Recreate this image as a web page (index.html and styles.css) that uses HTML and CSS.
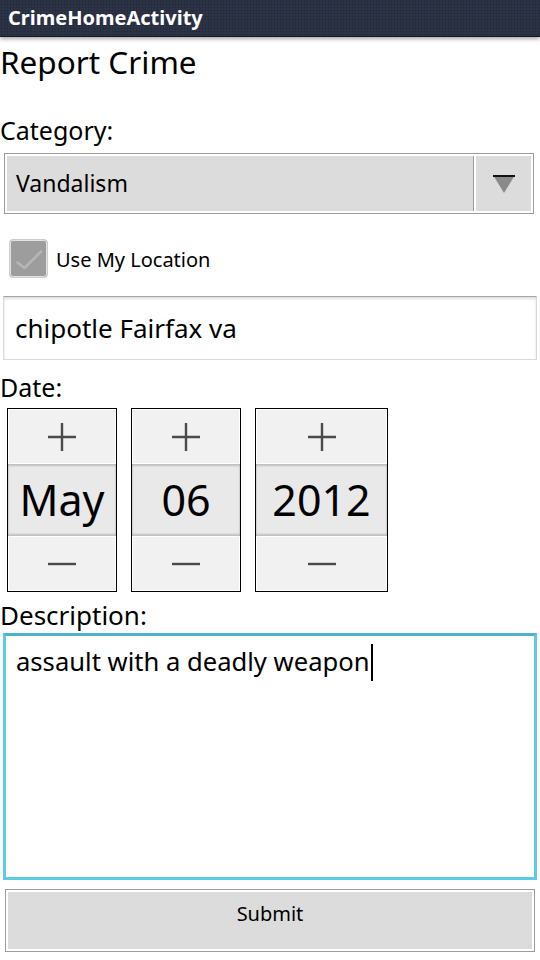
FILE: index.html
```html
<!DOCTYPE html>
<html>
<head>
<meta charset="utf-8">
<title>CrimeHomeActivity</title>
<link rel="stylesheet" href="styles.css">
</head>
<body>
<div class="titlebar">CrimeHomeActivity</div>
<div class="content">
  <h1 class="title">Report Crime</h1>
  <div class="label label-category">Category:</div>
  <div class="spinner">
    <div class="spinner-value">Vandalism</div>
    <div class="spinner-arrow">
      <svg width="22" height="18" viewBox="0 0 22 18"><polygon points="0,0 22,0 11,18" fill="#8a8a8a"/><rect x="0" y="0" width="22" height="2" fill="#111"/></svg>
    </div>
  </div>
  <div class="check-row">
    <span class="checkbox">
      <svg width="37" height="37" viewBox="0 0 37 37"><polyline points="7.5,22.5 14.5,28 31,11.5" fill="none" stroke="#b6b6b6" stroke-width="2.6" stroke-linecap="round" stroke-linejoin="round"/></svg>
    </span>
    <span class="check-label">Use My Location</span>
  </div>
  <div class="textfield">chipotle Fairfax va</div>
  <div class="label label-date">Date:</div>
  <div class="pickers">
    <div class="picker">
      <div class="pk-btn"><svg width="28" height="28" viewBox="0 0 28 28"><path d="M0 14H28M14 0V28" stroke="#4a4a4a" stroke-width="2.4"/></svg></div>
      <div class="pk-value">May</div>
      <div class="pk-btn"><svg width="28" height="28" viewBox="0 0 28 28"><path d="M0 14H28" stroke="#4a4a4a" stroke-width="2.4"/></svg></div>
    </div>
    <div class="picker">
      <div class="pk-btn"><svg width="28" height="28" viewBox="0 0 28 28"><path d="M0 14H28M14 0V28" stroke="#4a4a4a" stroke-width="2.4"/></svg></div>
      <div class="pk-value">06</div>
      <div class="pk-btn"><svg width="28" height="28" viewBox="0 0 28 28"><path d="M0 14H28" stroke="#4a4a4a" stroke-width="2.4"/></svg></div>
    </div>
    <div class="picker picker-wide">
      <div class="pk-btn"><svg width="28" height="28" viewBox="0 0 28 28"><path d="M0 14H28M14 0V28" stroke="#4a4a4a" stroke-width="2.4"/></svg></div>
      <div class="pk-value">2012</div>
      <div class="pk-btn"><svg width="28" height="28" viewBox="0 0 28 28"><path d="M0 14H28" stroke="#4a4a4a" stroke-width="2.4"/></svg></div>
    </div>
  </div>
  <div class="label label-desc">Description:</div>
  <div class="textarea">assault with a deadly weapon<span class="caret"></span></div>
  <div class="submit"><span class="submit-face">Submit</span></div>
</div>
</body>
</html>
```

FILE: styles.css
```css
html, body {
  margin: 0;
  padding: 0;
  background: #fff;
}
body {
  width: 540px;
  height: 960px;
  overflow: hidden;
  font-family: "Noto Sans", "Open Sans", "DejaVu Sans", sans-serif;
  color: #000;
}
.titlebar {
  position: relative;
  height: 36px;
  background-color: #2d3447;
  background-image: radial-gradient(rgba(0, 0, 0, 0.2) 0.8px, transparent 1.2px);
  background-size: 3px 3px;
  color: #fff;
  font-weight: bold;
  font-size: 20px;
  line-height: 36px;
  padding-left: 8px;
  box-shadow: 0 1px 0 #151820, 0 3px 4px rgba(0, 0, 0, 0.35);
}
.title {
  margin: 6px 0 0 0;
  font-size: 31.5px;
  font-weight: normal;
  line-height: 40px;
}
.label {
  font-size: 25px;
  line-height: 32px;
}
.label-category { margin-top: 32px; }
.label-date { margin-top: 11px; }
.label-desc { margin-top: 7px; font-size: 26px; }

.spinner {
  margin: 7px 6px 0 4px;
  height: 61px;
  box-sizing: border-box;
  border: 1px solid #9c9c9c;
  display: flex;
  background: #fff;
}
.spinner-value {
  flex: 1;
  margin: 2px 0 2px 2px;
  background: #dcdcdc;
  border-right: 1px solid #9c9c9c;
  font-size: 23px;
  line-height: 55px;
  padding-left: 9px;
}
.spinner-arrow {
  width: 55px;
  margin: 2px;
  background: #dcdcdc;
  display: flex;
  align-items: center;
  justify-content: center;
}

.check-row {
  display: flex;
  align-items: center;
  margin: 25px 0 0 9px;
  height: 39px;
}
.checkbox {
  width: 39px;
  height: 39px;
  box-sizing: border-box;
  border: 1px solid #cdcdcd;
  border-radius: 4px;
  background: #9d9d9d;
  box-shadow: inset 0 0 0 1px #e2e2e2;
  display: flex;
}
.check-label {
  font-size: 20px;
  line-height: 39px;
  padding-top: 2px;
  margin-left: 8px;
}

.textfield {
  margin: 18px 3px 0 3px;
  height: 64px;
  box-sizing: border-box;
  border: 1px solid #dadada;
  border-top-color: #a4a4a4;
  box-shadow: inset 0 2px 3px rgba(0, 0, 0, 0.13);
  font-size: 26px;
  line-height: 62px;
  padding-left: 11px;
}

.pickers {
  display: flex;
  gap: 14px;
  margin: 5px 0 0 7px;
}
.picker {
  width: 110px;
  height: 184px;
  box-sizing: border-box;
  border: 1px solid #000;
  display: flex;
  flex-direction: column;
  background: #fff;
}
.picker-wide { width: 133px; }
.pk-btn {
  height: 55px;
  background: #f1f1f1;
  display: flex;
  align-items: center;
  justify-content: center;
  box-shadow: inset 1px 1px 0 #fff, inset -1px -1px 0 #fff;
}
.pk-value {
  height: 72px;
  background: #e9e9e9;
  font-size: 43px;
  line-height: 72px;
  text-align: center;
  box-shadow: inset 0 2px 2px rgba(0, 0, 0, 0.18), inset 0 -2px 2px rgba(0, 0, 0, 0.18);
}

.textarea {
  margin: 2px 3px 0 3px;
  height: 247px;
  box-sizing: border-box;
  border: 3px solid #5ccbe4;
  border-top-color: #4bb2cb;
  padding: 8px 10px;
  font-size: 25.6px;
  line-height: 36px;
}
.caret {
  display: inline-block;
  width: 2px;
  height: 37px;
  background: #000;
  vertical-align: top;
  margin-left: 1px;
}

.submit {
  margin: 9px 5px 0 5px;
  height: 63px;
  box-sizing: border-box;
  border: 1px solid #9c9c9c;
  padding: 2px;
  background: #fff;
}
.submit-face {
  display: block;
  height: 57px;
  background: #dcdcdc;
  text-align: center;
  font-size: 20px;
  line-height: 44px;
}
```
